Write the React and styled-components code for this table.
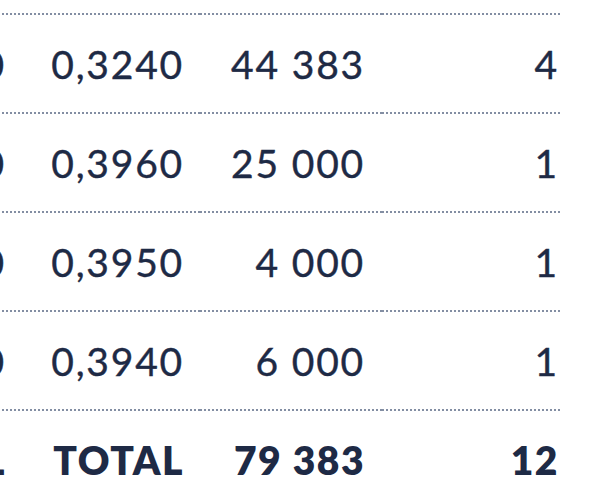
import React from 'react';
import styled, { createGlobalStyle } from 'styled-components';

const GlobalStyle = createGlobalStyle`
  html, body {
    margin: 0;
    padding: 0;
    background: #ffffff;
    overflow: hidden;
  }
  body {
    font-family: Lato, "Liberation Sans", sans-serif;
  }
`;

const rows = [
  { price: '0,3250', rate: '0,3240', qty: '44 383', orders: '4' },
  { price: '0,4000', rate: '0,3960', qty: '25 000', orders: '1' },
  { price: '0,4000', rate: '0,3950', qty: '4 000', orders: '1' },
  { price: '0,4000', rate: '0,3940', qty: '6 000', orders: '1' },
];

export default function App() {
  return (
    <Page>
      <GlobalStyle />
      <Table>
        {rows.map((r, i) => (
          <Row key={i}>
            <Cell $pad={12}>{r.price}</Cell>
            <Cell $pad={16}>{r.rate}</Cell>
            <Cell $pad={17}>{r.qty}</Cell>
            <Cell $pad={3}>{r.orders}</Cell>
          </Row>
        ))}
        <Row>
          <Cell $pad={12} $bold>TOTAL</Cell>
          <Cell $pad={16} $bold>TOTAL</Cell>
          <Cell $pad={17} $bold>79 383</Cell>
          <Cell $pad={3} $bold>12</Cell>
        </Row>
      </Table>
    </Page>
  );
}

const Page = styled.div`
  width: 604px;
  height: 490px;
  padding-top: 13px;
  box-sizing: border-box;
  overflow: hidden;
`;

const Table = styled.div`
  display: flex;
  flex-direction: column;
  margin-left: -162px;
`;

const Row = styled.div`
  display: grid;
  grid-template-columns: 180px 182px 182px 180px;
  height: 99px;
`;

const Cell = styled.div`
  display: flex;
  align-items: center;
  justify-content: flex-end;
  padding-top: 2px;
  padding-right: ${(p) => p.$pad}px;
  background-image: linear-gradient(to right, #838ea3 50%, transparent 50%);
  background-size: 4px 2px;
  background-repeat: repeat-x;
  background-position: left top;
  font-size: 39px;
  font-weight: ${(p) => (p.$bold ? 800 : 400)};
  letter-spacing: ${(p) => (p.$bold ? 1.5 : 1.8)}px;
  -webkit-text-stroke: ${(p) => (p.$bold ? 0 : 0.4)}px #1e2a45;
  color: #1e2a45;
  white-space: nowrap;
`;
